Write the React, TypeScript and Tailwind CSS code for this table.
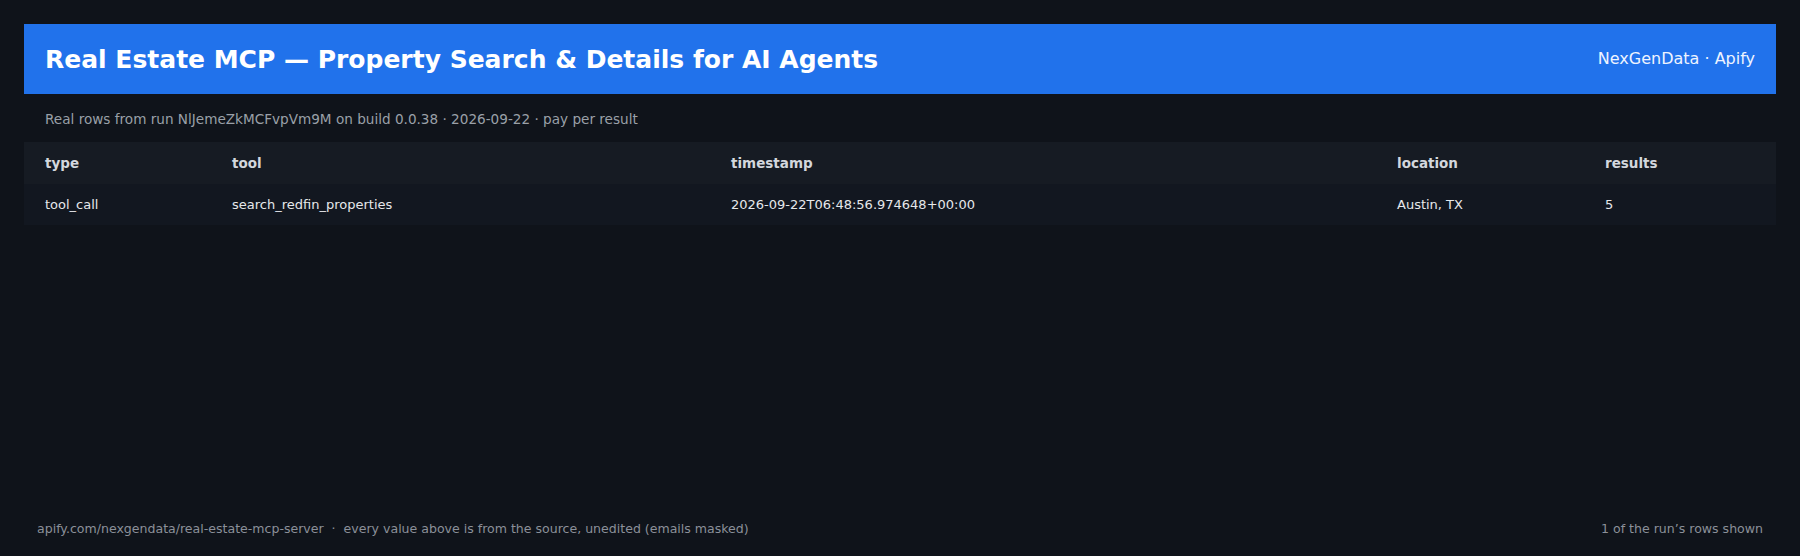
import React from "react";

const cols = "grid grid-cols-[187px_499px_666px_208px_1fr]";

export default function App() {
  return (
    <div
      className="w-[1800px] h-[556px] bg-[#0f131a] flex flex-col px-6 pt-6"
      style={{ fontFamily: '"DejaVu Sans", Verdana, sans-serif' }}
    >
      <div className="h-[70px] bg-[#2172eb] flex items-center justify-between px-[21px]">
        <div className="text-white font-bold text-[25px] leading-none">
          Real Estate MCP — Property Search &amp; Details for AI Agents
        </div>
        <div className="text-[#eef4ff] text-[16px] leading-none">NexGenData · Apify</div>
      </div>
      <div className="h-[48px] flex items-center px-[21px] pt-[2px] text-[13.6px] text-[#9aa0a8]">
        Real rows from run NlJemeZkMCFvpVm9M on build 0.0.38 · 2026-09-22 · pay per result
      </div>
      <div className="flex flex-col">
        <div className={`${cols} h-[42px] items-center bg-[#161b23] text-[13.5px] font-bold text-[#d3d7dd]`}>
          <div className="pl-[21px]">type</div>
          <div className="pl-[21px]">tool</div>
          <div className="pl-[21px]">timestamp</div>
          <div className="pl-[21px]">location</div>
          <div className="pl-[21px]">results</div>
        </div>
        <div className={`${cols} h-[41px] items-center bg-[#121720] text-[13px] text-[#e6e8eb]`}>
          <div className="pl-[21px]">tool_call</div>
          <div className="pl-[21px]">search_redfin_properties</div>
          <div className="pl-[21px]">2026-09-22T06:48:56.974648+00:00</div>
          <div className="pl-[21px]">Austin, TX</div>
          <div className="pl-[21px]">5</div>
        </div>
      </div>
      <div className="flex-1" />
      <div className="h-[54px] flex items-center justify-between px-[13px] text-[12.55px] text-[#8b9099]">
        <div>
          apify.com/nexgendata/real-estate-mcp-server &nbsp;·&nbsp; every value above is from the source, unedited (emails masked)
        </div>
        <div>1 of the run’s rows shown</div>
      </div>
    </div>
  );
}
